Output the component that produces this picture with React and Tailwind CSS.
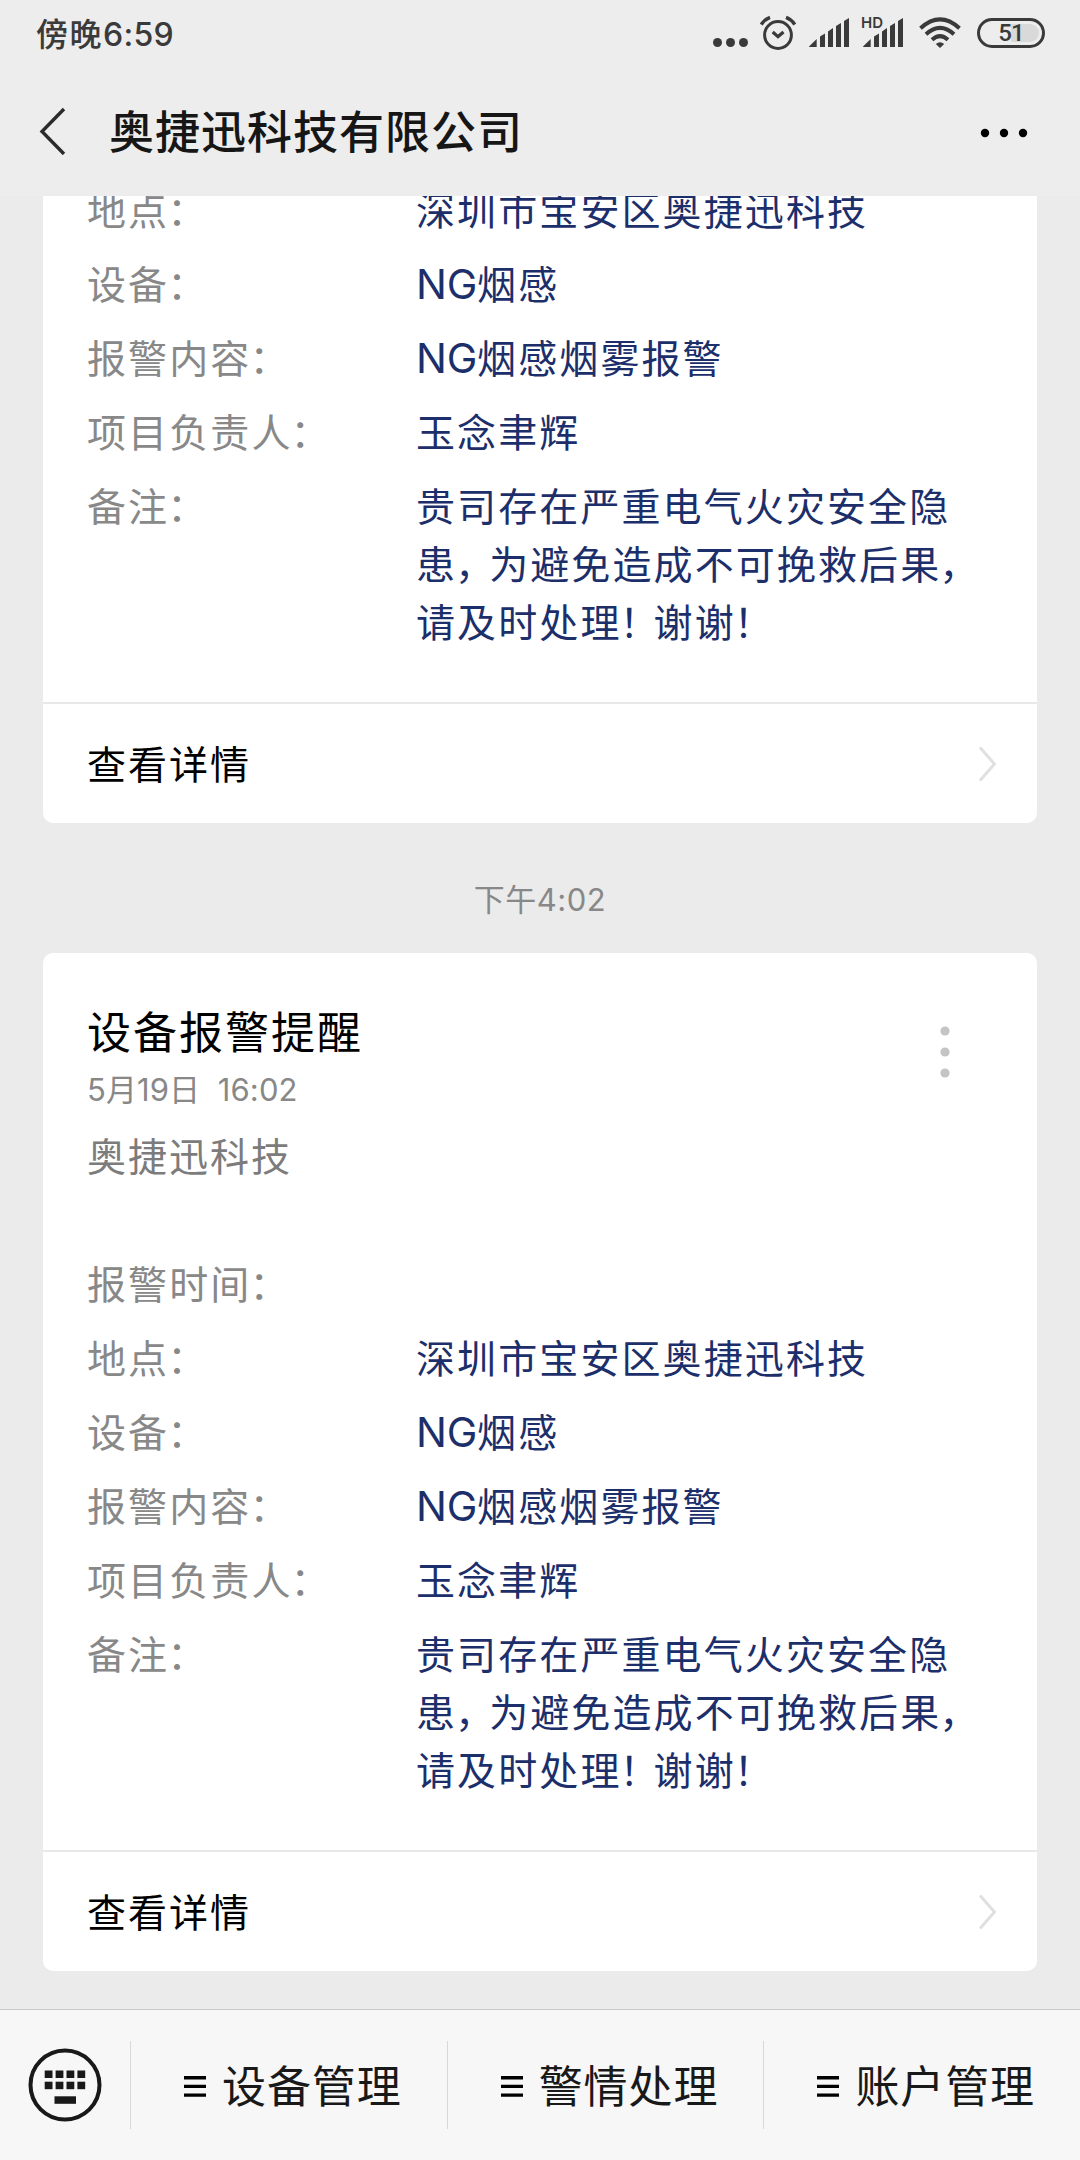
const baseRows = [
  { label: "地点", lines: ["深圳市宝安区奥捷迅科技"] },
  { label: "设备", lines: ["NG烟感"] },
  { label: "报警内容", lines: ["NG烟感烟雾报警"] },
  { label: "项目负责人", lines: ["玉念聿辉"] },
  {
    label: "备注",
    lines: ["贵司存在严重电气火灾安全隐", "患，为避免造成不可挽救后果，", "请及时处理！谢谢！"],
  },
];

const menus = ["设备管理", "警情处理", "账户管理"];

// full-width commas and exclamation marks are set a bit tighter
const Line = ({ text }) => (
  <p className="whitespace-nowrap">
    {text.split(/([，！]|NG)/).map((part, i) => {
      if (part === "，" || part === "！") {
        return (
          <span key={i} className="-ml-[2px] tracking-[-5px]">{part}</span>
        );
      }
      if (part === "NG") {
        return (
          <span key={i} className="text-[41px] leading-none tracking-[-0.2px]">{part}</span>
        );
      }
      return part;
    })}
  </p>
);

const Signal = () => (
  <svg width="40" height="30" viewBox="0 0 40 30" fill="#3a3a3a">
    <path d="M0 28.5 7.7 21v8H1.5Q0 29 0 28.5Z" />
    <path d="M11 18.5 16 15.5V29h-5Z" />
    <path d="M19 13.5 24 10V29h-5Z" />
    <path d="M27 8 32 5V29h-5Z" />
    <path d="M35 3 40 0V29h-5Z" />
  </svg>
);

const StatusBar = () => (
  <div className="h-[66px] flex items-center pl-[36px] pr-[35px] text-[#3a3a3a]">
    <span className="pt-[3px] text-[32px] leading-[66px] font-medium">
      <span className="tracking-[1.5px]">傍晚</span>
      <span className="tracking-[0.3px]">6:59</span>
    </span>
    <div className="ml-auto flex items-center">
      <svg className="mt-[2px]" width="38" height="30" viewBox="0 0 38 30" fill="#3a3a3a">
        <circle cx="7.5" cy="23.5" r="4.5" />
        <circle cx="20.5" cy="23.5" r="4.5" />
        <circle cx="33.5" cy="23.5" r="4.5" />
      </svg>
      <svg className="ml-[12px]" width="36" height="36" viewBox="0 0 36 36" fill="none" stroke="#3a3a3a" strokeWidth="3">
        <circle cx="18" cy="20" r="13.4" />
        <path d="M12.7 17 18 21.6 23.5 17" strokeWidth="3.2" />
        <path d="M1.2 9.6Q4.5 4.5 10 2.4M34.8 9.6Q31.5 4.5 26 2.4" strokeWidth="3.4" />
      </svg>
      <div className="ml-[13px]">
        <Signal />
      </div>
      <div className="ml-[14px] relative">
        <Signal />
        <span className="absolute -left-[2px] -top-[3px] text-[15px] leading-[15px] font-semibold">HD</span>
      </div>
      <svg className="ml-[16px]" width="42" height="32" viewBox="0 0 42 32" fill="none" stroke="#3a3a3a" strokeWidth="4">
        <path d="M1.5 11.2Q21-6.5 40.5 11.2" />
        <path d="M7 17.2Q21 4.5 35 17.2" />
        <path d="M13 22.8Q21 15.5 29 22.8" />
        <path d="M16.8 27Q21 23.6 25.2 27L21 31Z" fill="#3a3a3a" stroke="none" />
      </svg>
      <div className="ml-[16px] w-[68px] h-[30px] rounded-full border-[3px] border-[#3a3a3a] p-[3px]">
        <div className="h-full rounded-full bg-gradient-to-r from-transparent from-50% to-[#d9d9d9] to-50% flex items-center justify-center font-['Roboto'] text-[24px] leading-none tracking-[-0.8px] font-medium">
          51
        </div>
      </div>
    </div>
  </div>
);

const Header = () => (
  <header className="bg-[#ededed] h-[196px] shrink-0">
    <StatusBar />
    <div className="h-[130px] flex items-center pl-[38px] pr-[52px]">
      <svg width="28" height="48" viewBox="0 0 28 48" fill="none" stroke="#2b2b2b" strokeWidth="3.4">
        <path d="M26 2 4 24.5 26 47" />
      </svg>
      <h1 className="ml-[43px] pt-[3px] text-[45px] leading-[60px] font-medium tracking-[1px] text-[#161616]">
        奥捷迅科技有限公司
      </h1>
      <svg className="ml-auto mt-[3px]" width="48" height="10" viewBox="0 0 48 10" fill="#000">
        <circle cx="5" cy="5" r="4.2" />
        <circle cx="24" cy="5" r="4.2" />
        <circle cx="43" cy="5" r="4.2" />
      </svg>
    </div>
  </header>
);

const Rows = ({ rows }) => (
  <dl className="flex flex-col gap-[16px] text-[39px] leading-[58px] tracking-[2.1px]">
    {rows.map((row) => (
      <div key={row.label} className="flex">
        <dt className="w-[329px] text-[#888888]">
          {row.label}
          <span className="-ml-[2px]">：</span>
        </dt>
        <dd className="text-[#1c2f6b]">
          {row.lines.map((line) => (
            <Line key={line} text={line} />
          ))}
        </dd>
      </div>
    ))}
  </dl>
);

const CardFooter = () => (
  <div className="h-[121px] shrink-0 border-t-2 border-[#e8e8e8] flex items-center justify-between pl-[44px] pr-[40px] text-[39px] tracking-[2px] text-black">
    <span className="pt-[3px]">查看详情</span>
    <svg width="19" height="36" viewBox="0 0 19 36" fill="none" stroke="#e0e0e0" strokeWidth="3">
      <path d="M2 1.5 16.5 18 2 34.5" />
    </svg>
  </div>
);

const Keyboard = () => (
  <svg width="74" height="74" viewBox="0 0 74 74" fill="#191919">
    <circle cx="37" cy="37" r="34.5" fill="none" stroke="#191919" strokeWidth="4" />
    {[22.5, 33.7].map((y) =>
      [16.7, 27.6, 38.5, 49.4].map((x) => (
        <rect key={`${x}-${y}`} x={x} y={y} width="7.8" height="7.5" />
      ))
    )}
    <rect x="26.5" y="48.3" width="21.5" height="7.5" />
  </svg>
);

const BottomBar = () => (
  <nav className="h-[151px] shrink-0 bg-[#f7f7f7] border-t border-[#c8c8c8] flex items-center">
    <div className="w-[130px] flex justify-center">
      <Keyboard />
    </div>
    {menus.map((item) => (
      <div key={item} className="flex-1 h-[88px] border-l border-[#d8d8d8] flex items-center justify-center pl-[8px]">
        <svg className="mt-[2px]" width="22" height="21" viewBox="0 0 22 21" fill="#000">
          <path d="M0 0h22v3.4H0ZM0 8.7h22v3.4H0ZM0 17.4h22v3.4H0Z" />
        </svg>
        <span className="ml-[16px] pt-[3px] text-[44px] leading-[60px] tracking-[0.9px] text-[#191919]">{item}</span>
      </div>
    ))}
  </nav>
);

export default function App() {
  return (
    <div className="w-[1080px] h-[2160px] bg-[#ebebeb] flex flex-col overflow-hidden font-['Inter','Noto_Sans_CJK_SC',sans-serif]">
      <Header />

      <main className="flex-1 min-h-0 px-[43px]">
        {/* scrolled under the header, so the first row is partly hidden */}
        <section className="h-[627px] bg-white rounded-b-[10px] overflow-hidden flex flex-col justify-end">
          <div className="pl-[44px] pb-[50px]">
            <Rows rows={baseRows} />
          </div>
          <CardFooter />
        </section>

        <p className="h-[130px] pt-[25px] flex items-center justify-center text-[31px] tracking-[0.5px] text-[#888888]">
          下午4:02
        </p>

        <section className="h-[1018px] bg-white rounded-[10px] flex flex-col">
          <div className="flex justify-between pt-[49px] pl-[44px] pr-[87px]">
            <div>
              <h2 className="text-[44px] leading-[62px] tracking-[2px] text-black">设备报警提醒</h2>
              <p className="text-[31px] leading-[51px] tracking-[0.1px] text-[#888888] whitespace-pre">5月19日  16:02</p>
            </div>
            <svg className="mt-[24px]" width="10" height="52" viewBox="0 0 10 52" fill="#c4c4c4">
              <circle cx="5" cy="5" r="4.6" />
              <circle cx="5" cy="26" r="4.6" />
              <circle cx="5" cy="47" r="4.6" />
            </svg>
          </div>
          <p className="mt-[13px] pl-[44px] text-[39px] leading-[58px] tracking-[2px] text-[#7c7c7c]">奥捷迅科技</p>
          <div className="mt-auto pl-[44px] pb-[50px]">
            <Rows rows={[{ label: "报警时间", lines: [] }, ...baseRows]} />
          </div>
          <CardFooter />
        </section>
      </main>

      <BottomBar />
    </div>
  );
}
